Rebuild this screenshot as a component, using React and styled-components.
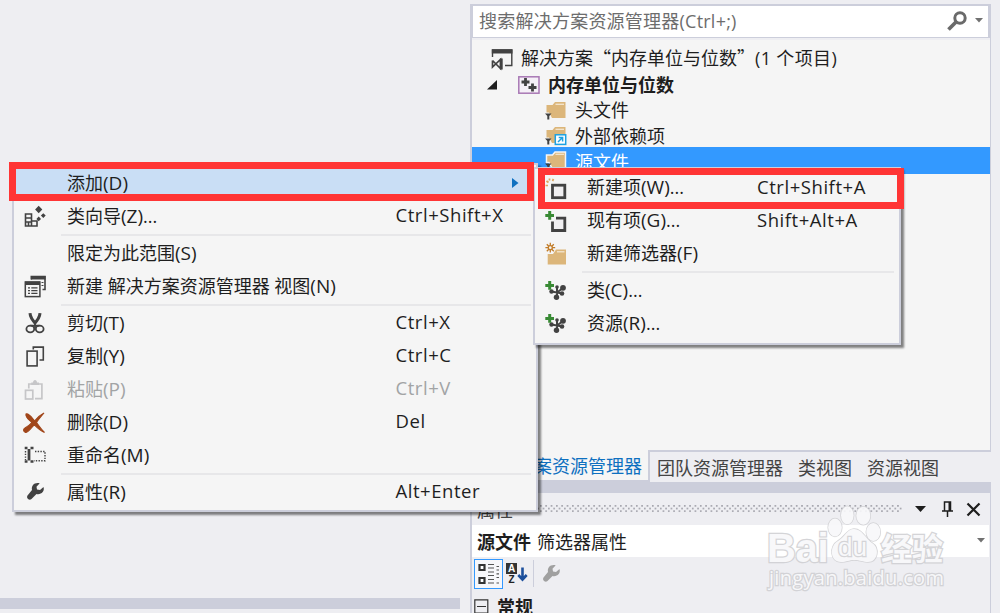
import React from "react";
import styled, { createGlobalStyle } from "styled-components";

const GlobalStyle = createGlobalStyle`
  * {
    box-sizing: border-box;
  }

  body {
    margin: 0;
    overflow: hidden;
    font-family: "Open Sans", "Noto Sans CJK SC", sans-serif;
    font-size: 18px;
    color: #1e1e1e;
  }

  svg {
    display: block;
    flex: none;
    overflow: visible;
  }
`;

const Window = styled.div`
  position: relative;
  display: flex;
  width: 1000px;
  height: 613px;
  overflow: hidden;
  background: #eeeef2;
  white-space: nowrap;
`;

const Editor = styled.div`
  width: 460px;
  display: flex;
  flex-direction: column;
  justify-content: flex-end;
  padding-bottom: 4px;
`;

const EditorBar = styled.div`
  height: 11px;
  background: #cccedb;
`;

const Dock = styled.div`
  width: 521px;
  margin-left: 10px;
  padding-top: 4px;
  display: flex;
  flex-direction: column;
`;

const Explorer = styled.div`
  height: 446px;
  border-left: 2px solid #cccedb;
  border-right: 1px solid #cccedb;
`;

const Search = styled.div`
  height: 34px;
  display: flex;
  align-items: center;
  background: #fff;
  border: 2px solid #cccedb;
  border-width: 2px 2px 1px 1px;
  padding: 0 5px 2px 6px;
  color: #6d6d6d;
`;

const SearchText = styled.span`
  flex: 1;
  padding-bottom: 2px;
  letter-spacing: 0.23px;
`;

const Tree = styled.div`
  height: 410px;
  margin-top: 2px;
  padding-top: 6px;
  background: #f5f5f5;
`;

const TreeRow = styled.div`
  height: ${(props) => props.$height}px;
  padding-left: ${(props) => props.$indent}px;
  display: flex;
  align-items: center;
  gap: 8px;
  background: ${(props) => (props.$selected ? "#3399ff" : "none")};
  color: ${(props) => (props.$selected ? "#fff" : "#1e1e1e")};
  font-weight: ${(props) => (props.$bold ? 700 : 400)};
`;

const TreeLabel = styled.span`
  padding-bottom: ${(props) => props.$lift || 0}px;
`;

const CjkText = styled.span`
  font-family: "Noto Sans CJK SC", sans-serif;
`;

const CountText = styled.span`
  letter-spacing: 0.35px;
`;

const Tabs = styled.div`
  height: 43px;
  display: flex;
  padding-bottom: 11px;
  background: #cccedb;
`;

const ActiveTab = styled.div`
  width: 178px;
  height: 30px;
  padding: 0 6px 1px 0;
  display: flex;
  align-items: center;
  justify-content: flex-end;
  background: #f5f5f5;
  border-left: 2px solid #cccedb;
  color: #0e70c0;
`;

const TabGroup = styled.div`
  flex: 1;
  height: 32px;
  display: flex;
  align-items: center;
  gap: 15px;
  padding: 0 0 0 7px;
  border: solid #cccedb;
  border-width: 2px 0 0 2px;
  background: #eeeef2;
  color: #444;
`;

const Properties = styled.div`
  flex: 1;
  border-left: 2px solid #cccedb;
  border-right: 1px solid #cccedb;
`;

const PaneTitle = styled.div`
  height: 32px;
  display: flex;
  align-items: center;
  padding: 0 11px 0 5px;
  color: #444;
`;

const Grip = styled.svg`
  margin: 0 13px 0 11px;
`;

const PaneButtons = styled.div`
  display: flex;
  align-items: center;
  gap: 15px;
  margin-left: auto;
`;

const ObjectRow = styled.div`
  height: 32px;
  display: flex;
  align-items: center;
  gap: 6px;
  padding: 0 4px 1px 5px;
  margin-right: 1px;
  background: #fff;

  svg {
    margin-left: auto;
  }
`;

const PropertyBar = styled.div`
  height: 34px;
  display: flex;
  align-items: center;
  padding: 0 0 1px 2px;
`;

const ToggleButton = styled.div`
  width: 29px;
  height: 30px;
  display: flex;
  align-items: center;
  justify-content: center;
  background: #f7f7fa;
  border: 1.5px solid #3399ff;
`;

const BarButton = styled.div`
  padding-left: ${(props) => props.$pad}px;
`;

const BarDivider = styled.div`
  width: 1px;
  height: 27px;
  margin-left: 5px;
  background: #cccedb;
`;

const Category = styled.div`
  display: flex;
  align-items: center;
  height: 30px;
  gap: 8px;
  padding-left: 2px;
  font-weight: 700;
`;

const Menu = styled.div`
  position: absolute;
  left: ${(props) => props.$x}px;
  top: ${(props) => props.$y}px;
  width: ${(props) => props.$width}px;
  height: ${(props) => props.$height}px;
  padding-top: ${(props) => props.$pad}px;
  background: #f5f5f5;
  border: 2px solid #cccedb;
  box-shadow: 3px 3px 2px rgba(0, 0, 0, 0.48);
`;

const MenuRow = styled.div`
  height: 33px;
  display: grid;
  grid-template-columns: ${(props) => props.$columns};
  align-items: center;
  background: ${(props) => (props.$active ? "#c9def5" : "none")};
  color: ${(props) => (props.$disabled ? "#a2a4a5" : "#1e1e1e")};
`;

const IconCell = styled.div`
  padding-left: 9px;
`;

const Label = styled.span`
  padding-bottom: 3px;
`;

const HotKey = styled.span`
  font-size: 19px;
  line-height: 1;
`;

const Shortcut = styled.span`
  padding-bottom: 3px;
  font-size: 18.5px;
  letter-spacing: 0.55px;
`;

const Separator = styled.div`
  height: 4px;
  padding-top: 1px;
  margin: 0 5px 0 47px;

  &::after {
    content: "";
    display: block;
    height: 2px;
    background: #e7e7e9;
  }
`;

// Red frames drawn above the menus
const Frame = styled.div`
  position: absolute;
  left: ${(props) => props.$x}px;
  top: ${(props) => props.$y}px;
  width: ${(props) => props.$width}px;
  height: ${(props) => props.$height}px;
  border: 7px solid #ff3535;
`;

const SubArrow = styled.div`
  justify-self: end;
  padding-right: 17px;
`;

const Watermark = styled.div`
  position: absolute;
  left: 767px;
  top: 505px;
  width: 180px;
  height: 86px;
  opacity: 0.9;
  color: #f8f8fa;
  paint-order: stroke fill;
  -webkit-text-stroke: 2.5px #d0d0d3;
`;

const Paw = styled.svg`
  position: absolute;
  left: 60px;
  top: 0;
`;

const Mark = styled.span`
  position: absolute;
  left: ${(props) => props.$x}px;
  top: ${(props) => props.$y}px;
  font-family: ${(props) => props.$font || '"Liberation Sans"'}, sans-serif;
  font-size: ${(props) => props.$size}px;
  font-weight: ${(props) => props.$weight || 700};
  line-height: 1;
  letter-spacing: ${(props) => props.$spacing || 0}px;
`;

const Icon = ({ size = 24, w, h, children }) => (
  <svg
    width={w || size}
    height={h || size}
    viewBox={`0 0 ${w || size} ${h || size}`}
    fill="none"
  >
    {children}
  </svg>
);

const WRENCH =
  "M20.5 7 L17 10 L14 9.5 L13.5 6.8 L16.7 3.3 C12 2 8 5 9 10 L4.5 15.5 C3 18 6 21 8.5 19 L13.5 14 C18 15 22 11.5 20.5 7Z";

const ClassWizardIcon = () => (
  <Icon>
    <path
      d="M2.5 22V10H8.5V17H14V22ZM2.5 14H8.5M2.5 18H9M8.5 17V22M5.5 18V22"
      stroke="#424242"
      strokeWidth="1.6"
    />
    <path
      d="M15.7 1.7L19.3 5.5L15.7 9.3L12.1 5.5ZM20.3 9.2L22.7 11.6L20.3 14L17.9 11.6ZM15.7 12.5L18 14.9L15.7 17.3L13.4 14.9Z"
      fill="#424242"
    />
  </Icon>
);

const NewViewIcon = () => (
  <Icon>
    <path d="M8.3 5.5V2.5H22V15.5H19.5" stroke="#424242" strokeWidth="1.6" />
    <path d="M8 2H22.5V5.5H8Z" fill="#424242" />
    <rect x="2.3" y="8" width="14.6" height="14.6" stroke="#424242" strokeWidth="1.5" />
    <path d="M2 7.5H17V11H2Z" fill="#424242" />
    <path
      d="M5 13.8H7M8.3 13.8H14.5M5 16.6H7M8.3 16.6H14.5M5 19.4H7M8.3 19.4H14.5"
      stroke="#424242"
      strokeWidth="1.3"
    />
    <path d="M18.5 8.5H20.5M18.5 11.5H20.5" stroke="#424242" strokeWidth="1.2" />
  </Icon>
);

const CutIcon = () => (
  <Icon>
    <path
      d="M7 2.2C7.2 6 9.500 9.500 13 13M17 2.2C16.800 6 14.500 9.500 11 13"
      stroke="#424242"
      strokeWidth="3"
    />
    <ellipse cx="7.3" cy="18" rx="3.9" ry="3.3" stroke="#424242" strokeWidth="1.8" />
    <ellipse cx="16.7" cy="18" rx="3.9" ry="3.3" stroke="#424242" strokeWidth="1.8" />
    <path d="M12 11.5V17M7.5 14.7H16.5" stroke="#424242" strokeWidth="1.8" />
  </Icon>
);

const CopyIcon = () => (
  <Icon>
    <rect x="4.1" y="7.1" width="10" height="14.8" stroke="#424242" strokeWidth="1.6" />
    <path d="M10.3 5.5V3.1H20.3V16H16.5" stroke="#424242" strokeWidth="1.6" />
  </Icon>
);

const PasteIcon = () => (
  <Icon>
    <rect x="2.5" y="13.3" width="7.3" height="8.7" stroke="#c6c6c8" strokeWidth="1.7" />
    <path d="M5.8 11.5V7H18.9V21.7H12" stroke="#c6c6c8" strokeWidth="1.7" />
    <path d="M8.3 8V5.5H10C10 2 14 2 14 5.5H16V8Z" fill="#c6c6c8" />
  </Icon>
);

const DeleteIcon = () => (
  <Icon>
    <path
      d="M3 4C6 3 9 8 11.5 11C14 8 17 5 21 3C18 6.5 15.5 9.5 13.5 12.5C16 16 18.5 19.5 21.5 22.5C17 20.5 14 17.5 11.3 14.8C8.5 17 6 22.5 2.5 22.5C0 21.5 0 19 2 18C5 16.5 7 14.5 8.8 12.5C6.5 10 2 7.5 3 4Z"
      fill="#a1461a"
      stroke="#a1461a"
      strokeWidth="1.1"
    />
  </Icon>
);

const RenameIcon = () => (
  <Icon>
    <path
      d="M1.7 5H4.5M7.5 5H10.5M1.7 18.5H4.5M7.5 18.5H10.5"
      stroke="#424242"
      strokeWidth="2.6"
    />
    <path d="M6 6V17.5" stroke="#424242" strokeWidth="2.8" />
    <path
      d="M2.5 8V17M12 8.5H22V17.7H11"
      stroke="#424242"
      strokeWidth="1.4"
      strokeDasharray="1.4 1.3"
    />
  </Icon>
);

const WrenchIcon = ({ color = "#424242" }) => (
  <Icon>
    <path d={WRENCH} fill={color} />
  </Icon>
);

const Plus = () => (
  <path
    d="M4.2 2H7.2V4.9H10V7.9H7.2V10.8H4.2V7.9H1.3V4.9H4.2Z"
    fill="#388a34"
  />
);

const NewItemIcon = () => (
  <Icon>
    <rect x="8.5" y="9.2" width="12.3" height="12.5" fill="#f0eff1" stroke="#424242" strokeWidth="2.8" />
    <path
      d="M1.5 9.5H4M2.5 5L4.5 6.5M5.5 2.5V4.5M9.5 3L8.5 5"
      stroke="#dca55c"
      strokeWidth="1.7"
    />
  </Icon>
);

const ExistingItemIcon = () => (
  <Icon>
    <path
      d="M12 9.2H20.8V21.5H8.5V12.5"
      fill="#f0eff1"
      stroke="#424242"
      strokeWidth="2.8"
    />
    <Plus />
  </Icon>
);

const NewFilterIcon = () => (
  <Icon>
    <path d="M3.7 12H9L12 7.5H22V22.5H3.7Z" fill="#dcb67a" />
    <path d="M13 9.8H20.5" stroke="#f6ead7" strokeWidth="1.2" />
    <path
      d="M6.3 .8V10.6M1.4 5.7H11.2M2.8 2.2L9.8 9.2M9.8 2.2L2.8 9.2"
      stroke="#c27d2a"
      strokeWidth="1.3"
    />
    <circle cx="6.3" cy="5.7" r="2" fill="#f5f5f5" stroke="#c27d2a" strokeWidth="1.3" />
  </Icon>
);

const ClassIcon = () => (
  <Icon>
    <path
      d="M7 12.5L13 13.5L19 9M13 7.5L13 18M13 13.5L18 14.5"
      stroke="#424242"
      strokeWidth="2"
    />
    <circle cx="7.5" cy="12.5" r="2.2" fill="#424242" />
    <circle cx="19" cy="8.8" r="2.9" fill="#424242" />
    <circle cx="13" cy="8" r="1.8" fill="#424242" />
    <circle cx="12.5" cy="18.3" r="2.7" fill="#424242" />
    <circle cx="18" cy="14.5" r="2.3" fill="#424242" />
    <Plus />
  </Icon>
);

const FolderIcon = ({ link, outlined }) => (
  <Icon w={22} h={19}>
    <path
      d="M1.5 4H7.5L10 1H20.5V17H7L4 11.5H1.5Z"
      fill="#dcb67a"
      stroke={outlined ? "#f5f5f5" : "none"}
      strokeWidth="1.5"
    />
    <path d="M10.5 3.3H19" stroke="#f4e7d0" strokeWidth="1.3" />
    <path d="M0 12.5H6.5L4.3 15V18.5H2.3V15Z" fill="#424242" />
    {link && (
      <g>
        <rect x="10.3" y="8.8" width="10.4" height="9.6" fill="#fff" stroke="#1ba1e2" strokeWidth="1.5" />
        <path d="M13 16L17 12M13.7 11.5H17.6V15.5" stroke="#1ba1e2" strokeWidth="1.5" />
      </g>
    )}
  </Icon>
);

const SolutionIcon = () => (
  <Icon w={22} h={21}>
    <path d="M1.5 8V1H20.8V16.5H14" stroke="#424242" strokeWidth="1.4" />
    <path d="M.8 .3H21.5V4.5H.8Z" fill="#424242" />
    <path
      d="M1.5 11.5V18L9.5 10.5V19.5L1.5 11.5"
      stroke="#424242"
      strokeWidth="1.7"
    />
    <path d="M10.3 9.5V20.5" stroke="#424242" strokeWidth="2.8" />
  </Icon>
);

const ProjectIcon = () => (
  <Icon w={22} h={18}>
    <rect x=".8" y=".8" width="20.2" height="16.4" fill="#f5f0f7" stroke="#a878b4" strokeWidth="1.5" />
    <path
      d="M7.5 2V10M3.5 6H11.5M14.5 7.5V15.5M10.5 11.5H18.5"
      stroke="#424242"
      strokeWidth="2.8"
    />
  </Icon>
);

const SearchIcon = () => (
  <Icon w={20} h={20}>
    <circle cx="13" cy="7" r="5.2" stroke="#6a6a6a" strokeWidth="3" />
    <path d="M9 11L1.5 18.5" stroke="#6a6a6a" strokeWidth="3.8" />
  </Icon>
);

const DownArrow = ({ w = 8, h = 4.5, color = "#717171" }) => (
  <Icon w={w} h={h}>
    <path d={`M0 0H${w}L${w / 2} ${h}Z`} fill={color} />
  </Icon>
);

const CategorizedIcon = () => (
  <Icon w={22} h={22}>
    <path
      d="M1.5 2H6.5V7H1.5ZM1.5 15H6.5V20H1.5Z"
      stroke="#333"
      strokeWidth="2.2"
      fill="#fff"
    />
    <path
      d="M10 1.5H16M10 5H16M10 9H16M10 12.5H16M10 16.5H16M10 20H16"
      stroke="#555"
      strokeWidth="1.2"
    />
    <path
      d="M18.5 3.5H21M18.5 7H21M18.5 10.8H21M18.5 14.5H21M18.5 20H21"
      stroke="#555"
      strokeWidth="1.2"
    />
  </Icon>
);

const SortBox = styled.div`
  display: flex;
  align-items: center;
`;

const SortLetters = styled.div`
  width: 11px;
  text-align: center;
  font: 700 10px/11px "Liberation Sans", sans-serif;
`;

const SortLetter = styled.div`
  height: 11px;
  background: ${(props) => (props.$filled ? "#333" : "none")};
  color: ${(props) => (props.$filled ? "#fff" : "#222")};
`;

const SortIcon = () => (
  <SortBox>
    <SortLetters>
      <SortLetter $filled>A</SortLetter>
      <SortLetter>Z</SortLetter>
    </SortLetters>
    <Icon w={11} h={16}>
      <path d="M5.5 1.5V13M1.3 9L5.5 13.5L9.7 9" stroke="#1c4f9c" strokeWidth="2.6" />
    </Icon>
  </SortBox>
);

const mainItems = [
  { label: "添加", hotKey: "D", active: true, sub: true },
  { label: "类向导", hotKey: "Z", more: true, keys: "Ctrl+Shift+X", icon: <ClassWizardIcon /> },
  null,
  { label: "限定为此范围", hotKey: "S" },
  { label: "新建 解决方案资源管理器 视图", hotKey: "N", icon: <NewViewIcon /> },
  null,
  { label: "剪切", hotKey: "T", keys: "Ctrl+X", icon: <CutIcon /> },
  { label: "复制", hotKey: "Y", keys: "Ctrl+C", icon: <CopyIcon /> },
  { label: "粘贴", hotKey: "P", keys: "Ctrl+V", icon: <PasteIcon />, disabled: true },
  { label: "删除", hotKey: "D", keys: "Del", icon: <DeleteIcon /> },
  { label: "重命名", hotKey: "M", icon: <RenameIcon /> },
  null,
  { label: "属性", hotKey: "R", keys: "Alt+Enter", icon: <WrenchIcon /> },
];

const addItems = [
  { label: "新建项", hotKey: "W", more: true, keys: "Ctrl+Shift+A", icon: <NewItemIcon /> },
  { label: "现有项", hotKey: "G", more: true, keys: "Shift+Alt+A", icon: <ExistingItemIcon /> },
  { label: "新建筛选器", hotKey: "F", icon: <NewFilterIcon /> },
  null,
  { label: "类", hotKey: "C", more: true, icon: <ClassIcon /> },
  { label: "资源", hotKey: "R", more: true, icon: <ClassIcon /> },
];

const MenuItems = ({ items, columns }) =>
  items.map((item, i) =>
    item ? (
      <MenuRow
        key={i}
        $columns={columns}
        $active={item.active}
        $disabled={item.disabled}
      >
        <IconCell>{item.icon}</IconCell>
        <Label>
          {item.label}
          <HotKey>({item.hotKey})</HotKey>
          {item.more && "..."}
        </Label>
        {item.sub ? (
          <SubArrow>
            <Icon w={7} h={10}>
              <path d="M0 0L6.5 5L0 10Z" fill="#0e70c0" />
            </Icon>
          </SubArrow>
        ) : (
          <Shortcut>{item.keys}</Shortcut>
        )}
      </MenuRow>
    ) : (
      <Separator key={i} />
    )
  );

const App = () => {
  return (
    <>
      <GlobalStyle />
      <Window>
        <Editor>
          <EditorBar />
        </Editor>
        <Dock>
          <Explorer>
            <Search>
              <SearchText>搜索解决方案资源管理器(Ctrl+;)</SearchText>
              <SearchIcon />
              <BarButton $pad={8}>
                <DownArrow />
              </BarButton>
            </Search>
            <Tree>
              <TreeRow $height={26} $indent={19}>
                <SolutionIcon />
                <TreeLabel $lift={4}>
                  解决方案<CjkText>“内存单位与位数”</CjkText>
                  <CountText>(1 个项目)</CountText>
                </TreeLabel>
              </TreeRow>
              <TreeRow $height={26} $indent={15} $bold>
                <Icon w={23} h={10}>
                  <path d="M10 0V9.5H0Z" fill="#1e1e1e" />
                </Icon>
                <ProjectIcon />
                <TreeLabel $lift={2}>内存单位与位数</TreeLabel>
              </TreeRow>
              <TreeRow $height={25} $indent={73}>
                <FolderIcon />
                <TreeLabel $lift={3}>头文件</TreeLabel>
              </TreeRow>
              <TreeRow $height={24} $indent={73}>
                <FolderIcon link />
                <TreeLabel>外部依赖项</TreeLabel>
              </TreeRow>
              <TreeRow $height={27} $indent={73} $selected>
                <FolderIcon outlined />
                <TreeLabel>源文件</TreeLabel>
              </TreeRow>
            </Tree>
          </Explorer>
          <Tabs>
            <ActiveTab>解决方案资源管理器</ActiveTab>
            <TabGroup>
              <span>团队资源管理器</span>
              <span>类视图</span>
              <span>资源视图</span>
            </TabGroup>
          </Tabs>
          <Properties>
            <PaneTitle>
              <span>属性</span>
              <Grip width="378" height="8">
                <pattern id="grip" width="5.33" height="5.33" patternUnits="userSpaceOnUse">
                  <rect width="1.7" height="1.7" fill="#a6a6ae" />
                  <rect x="2.67" y="2.67" width="1.7" height="1.7" fill="#a6a6ae" />
                </pattern>
                <rect width="378" height="7.2" fill="url(#grip)" />
              </Grip>
              <PaneButtons>
                <DownArrow w={11} h={6} color="#1e1e1e" />
                <Icon w={11} h={16}>
                  <path
                    d="M3.5 10V1H9.5V10M1 10H12M6.5 10V16"
                    stroke="#1e1e1e"
                    strokeWidth="1.5"
                  />
                  <path d="M8.5 1V10" stroke="#1e1e1e" strokeWidth="2" />
                </Icon>
                <Icon w={14} h={13}>
                  <path d="M.5 .5L12.5 12.5M12.5 .5L.5 12.5" stroke="#1e1e1e" strokeWidth="2.2" />
                </Icon>
              </PaneButtons>
            </PaneTitle>
            <ObjectRow>
              <b>源文件</b>
              <span>筛选器属性</span>
              <DownArrow />
            </ObjectRow>
            <PropertyBar>
              <ToggleButton>
                <CategorizedIcon />
              </ToggleButton>
              <BarButton $pad={3}>
                <SortIcon />
              </BarButton>
              <BarDivider />
              <BarButton $pad={5}>
                <WrenchIcon color="#a0a0a0" />
              </BarButton>
            </PropertyBar>
            <Category>
              <Icon w={15} h={15}>
                <path d="M.8 .8H13.8V14H.8ZM3 7.5H12" stroke="#333" strokeWidth="1.2" />
              </Icon>
              <span>常规</span>
            </Category>
          </Properties>
        </Dock>

        <Menu $x={12} $y={163} $width={526} $height={349} $pad={1.5}>
          <MenuItems items={mainItems} columns="53px 328.5px 1fr" />
        </Menu>
        <Menu $x={533} $y={167} $width={368} $height={178} $pad={2}>
          <MenuItems items={addItems} columns="52px 170px 1fr" />
        </Menu>
        <Frame $x={9} $y={162} $width={525} $height={39} />
        <Frame $x={538} $y={168} $width={366} $height={41} />

        <Watermark>
          <Mark $x={0} $y={23} $size={40} $spacing={-0.3}>
            Bai
          </Mark>
          <Paw width="62" height="58" viewBox="0 0 62 58">
            <g fill="#f8f8fa" stroke="#d0d0d3" strokeWidth="1.5">
              <ellipse cx="8" cy="22.5" rx="6.8" ry="9" />
              <ellipse cx="20.3" cy="10.3" rx="6.3" ry="9" />
              <ellipse cx="36.3" cy="10.7" rx="7" ry="9" />
              <ellipse cx="46.3" cy="27" rx="7" ry="9" />
              <path d="M27 24C20 24 18 32 11 36C2 41 3 57 14 57C20 57 22 55 27 55C33 55 36 57 41 57C51 57 53 43 45 38C38 33 35 24 27 24Z" />
            </g>
          </Paw>
          <Mark $x={71} $y={29} $size={26} $weight={400}>
            du
          </Mark>
          <Mark $x={114} $y={26} $size={31} $font='"Noto Sans CJK SC"'>
            经验
          </Mark>
          <Mark $x={2} $y={63} $size={20} $weight={400} $spacing={0.3} $font='"Open Sans"'>
            jingyan.baidu.com
          </Mark>
        </Watermark>
      </Window>
    </>
  );
};

export default App;
